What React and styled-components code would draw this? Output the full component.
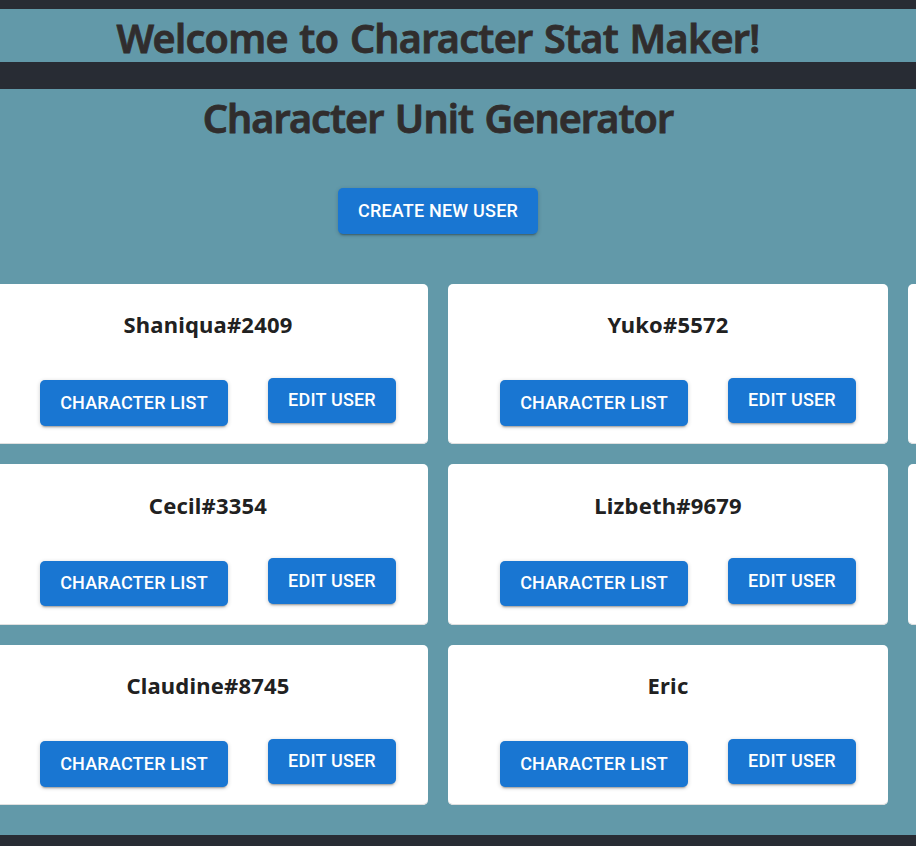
import React from "react";
import styled, { createGlobalStyle } from "styled-components";

const Global = createGlobalStyle`
  *{box-sizing:border-box}
  body{margin:0;background:#282c34;overflow:hidden;font-family:"Noto Sans","Open Sans",sans-serif}
`;
const Page = styled.main`
  height:846px;padding-top:9px;overflow:hidden;
`;
const Banner = styled.header`
  height:53px;background:#6299a9;display:flex;justify-content:center;padding-right:40px;
`;
const Section = styled.section`
  margin-top:27px;height:746px;background:#6299a9;overflow:hidden;
  display:flex;flex-direction:column;
`;
const Title = styled.h1`
  margin:0;color:#302d2d;font-size:39.5px;line-height:58px;font-weight:600;white-space:nowrap;
  letter-spacing:${p => p.$tracking || 0}px;word-spacing:2px;-webkit-text-stroke:.8px #302d2d;
`;
const Top = styled.div`
  display:flex;flex-direction:column;align-items:center;padding-right:40px;height:195px;flex:none;
`;
const Button = styled.button`
  border:0;border-radius:5px;background:#1976d2;color:#fff;padding:0 0 ${p => p.$lift || 0}px;
  font:500 18px/1 Roboto,sans-serif;letter-spacing:.2px;white-space:nowrap;
  width:${p => p.$w}px;height:${p => p.$h || 46}px;
  box-shadow:0 3px 2px -2px rgba(0,0,0,.3),0 1px 4px rgba(0,0,0,.2);
`;
const CreateButton = styled(Button)`margin-top:41px;`;
const Grid = styled.div`
  display:grid;grid-template-columns:repeat(3,440px);grid-template-rows:160px 161px 160px;
  row-gap:20px;column-gap:20px;margin-left:-12px;
`;
const Card = styled.article`
  background:#fff;border-radius:5px;display:flex;flex-direction:column;align-items:center;
  box-shadow:inset 0 -1px #e0e0e0;
`;
const Name = styled.h2`
  margin:${p => p.$tall ? 26 : 25}px 0 0;color:#212121;font-size:22px;line-height:30px;font-weight:700;letter-spacing:.2px;
`;
const Actions = styled.div`
  display:flex;gap:40px;margin-top:${p => p.$tall ? 38 : 39}px;width:100%;padding-left:52px;
`;
const ListButton = styled(Button)`margin-top:${p => p.$tall ? 3 : 2}px;`;

const rows = [
  { names: ["Shaniqua#2409", "Yuko#5572", ""] },
  { names: ["Cecil#3354", "Lizbeth#9679", ""], tall: true },
  { names: ["Claudine#8745", "Eric"] },
];

function UserCard({ name, tall }) {
  if (!name) return <Card />;
  return (
    <Card>
      <Name $tall={tall}>{name}</Name>
      <Actions $tall={tall}>
        <ListButton $w={188} $h={tall ? 45 : 46} $tall={tall} $lift={tall ? 1 : 0}>CHARACTER LIST</ListButton>
        <Button $w={128} $h={tall ? 46 : 45} $lift={tall ? 1 : 2}>EDIT USER</Button>
      </Actions>
    </Card>
  );
}

export default function App() {
  return (
    <Page>
      <Global />
      <Banner><Title $tracking={-0.72}>Welcome to Character Stat Maker!</Title></Banner>
      <Section>
        <Top>
          <Title $tracking={-0.92}>Character Unit Generator</Title>
          <CreateButton $w={200}>CREATE NEW USER</CreateButton>
        </Top>
        <Grid>
          {rows.flatMap((row, r) =>
            row.names.map((name, c) => <UserCard key={`${r}-${c}`} name={name} tall={row.tall} />)
          )}
        </Grid>
      </Section>
    </Page>
  );
}
